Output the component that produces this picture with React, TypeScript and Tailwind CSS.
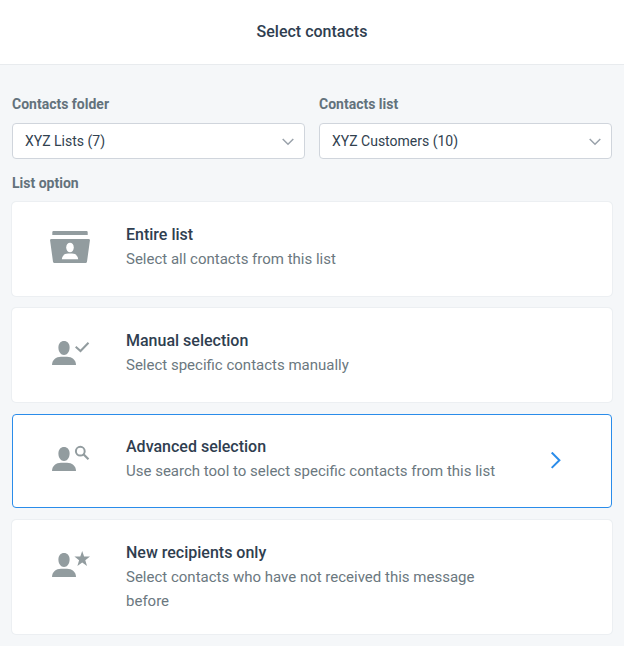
import { useState } from "react";
import type { ReactNode } from "react";

type Option = {
    id: string;
    title: string;
    description: string;
    icon: ReactNode;
};

const OptionIcon = ({ children }: { children: ReactNode }) => (
    <svg width="40" height="36" viewBox="0 0 40 36" fill="currentColor" aria-hidden="true" className="mt-[7px] shrink-0 text-[#929c9f]">
        {children}
    </svg>
);

const Person = () => (
    <>
        <path d="M14 5c3.300 0 5.600 2.500 5.600 6.500 0 4.200-2.400 7.500-5.600 7.500s-5.600-3.300-5.600-7.500C8.400 7.500 10.700 5 14 5z" />
        <path d="M2 29c0-5 4-8.200 9-8.200h6c5 0 9 3.200 9 8.200z" />
    </>
);

const options: Option[] = [
    {
        id: "entire",
        title: "Entire list",
        description: "Select all contacts from this list",
        icon: (
            <OptionIcon>
                <path d="M3.500 1h33a1.200 1.200 0 0 1 1.200 1.200V5H2.300V2.200A1.200 1.200 0 0 1 3.500 1z" />
                <path d="M1.400 9h37.200a1.300 1.300 0 0 1 1.300 1.500l-2.900 21.200a1.600 1.600 0 0 1-1.600 1.300H4.600A1.600 1.600 0 0 1 3 31.700L.100 10.500A1.300 1.300 0 0 1 1.400 9z" />
                <ellipse cx="20" cy="17.500" rx="3.800" ry="4.800" fill="white" />
                <path d="M11.800 29.300c.3-3.600 2.800-5.700 6.200-5.700h4c3.400 0 5.900 2.100 6.200 5.700z" fill="white" />
            </OptionIcon>
        ),
    },
    {
        id: "manual",
        title: "Manual selection",
        description: "Select specific contacts manually",
        icon: (
            <OptionIcon>
                <Person />
                <path d="M25.700 10.700l4.800 4.300 8-8.300" fill="none" stroke="currentColor" strokeWidth="2" />
            </OptionIcon>
        ),
    },
    {
        id: "advanced",
        title: "Advanced selection",
        description: "Use search tool to select specific contacts from this list",
        icon: (
            <OptionIcon>
                <Person />
                <circle cx="30.300" cy="9.200" r="4.400" fill="none" stroke="currentColor" strokeWidth="2" />
                <path d="M33.500 12.300l5 5" fill="none" stroke="currentColor" strokeWidth="2.200" />
            </OptionIcon>
        ),
    },
    {
        id: "new",
        title: "New recipients only",
        description: "Select contacts who have not received this message before",
        icon: (
            <OptionIcon>
                <Person />
                <path d="M32.200 3l1.900 5.600h5.900l-4.700 3.600 1.700 5.800-4.800-3.500-4.800 3.500 1.700-5.800-4.700-3.600h5.900z" />
            </OptionIcon>
        ),
    },
];

const SelectField = ({ id, label, value }: { id: string; label: string; value: string }) => (
    <div className="min-w-0 flex-1">
        <label htmlFor={id} className="block text-sm leading-5 font-bold text-[#63727c]">
            {label}
        </label>
        <div className="relative mt-[9px]">
            <select
                id={id}
                className="block h-9 w-full appearance-none rounded border border-[#d0d5dc] bg-white pr-9 pl-3 text-sm text-[#31414f]"
            >
                <option>{value}</option>
            </select>
            <svg
                width="12"
                height="8"
                viewBox="0 0 12 8"
                fill="none"
                stroke="#9aa2ab"
                strokeWidth="1.500"
                aria-hidden="true"
                className="pointer-events-none absolute top-[15px] right-[11px]"
            >
                <path d="M.700 1L6 6.300 11.300 1" />
            </svg>
        </div>
    </div>
);

export default function App() {
    const [selected, setSelected] = useState("advanced");

    return (
        <div className="min-h-screen bg-[#f5f7f9] font-['Roboto',sans-serif]">
            <header className="border-b border-[#e8ebee] bg-white px-3 py-5">
                <h1 className="text-center text-base leading-6 font-medium text-[#2f3e50]">Select contacts</h1>
            </header>

            <main className="px-3 pt-[29px] pb-3">
                <div className="flex gap-[14px]">
                    <SelectField id="folder" label="Contacts folder" value="XYZ Lists (7)" />
                    <SelectField id="list" label="Contacts list" value="XYZ Customers (10)" />
                </div>

                <h2 id="list-option" className="mt-[14px] text-sm leading-5 font-bold text-[#63727c]">
                    List option
                </h2>
                <div role="group" aria-labelledby="list-option" className="mt-[9px] flex flex-col gap-3">
                    {options.map((option) => {
                        const active = option.id === selected;
                        return (
                            <button
                                key={option.id}
                                type="button"
                                aria-pressed={active}
                                onClick={() => setSelected(option.id)}
                                className={`flex min-h-[94px] w-full items-start rounded border bg-white py-5 pr-[49px] pl-[37px] text-left ${active ? "border-[#2a8cea]" : "border-white shadow-[0_0_0_1px_#eceff2]"}`}
                            >
                                {option.icon}
                                <span className="ml-9 max-w-96 flex-1">
                                    <span className="block text-base leading-6 font-medium text-[#2f3e50]">{option.title}</span>
                                    <span className="block text-[15px] leading-6 text-[#6b7880]">{option.description}</span>
                                </span>
                                {active && (
                                    <svg
                                        width="12"
                                        height="18"
                                        viewBox="0 0 12 18"
                                        fill="none"
                                        stroke="#2a8cea"
                                        strokeWidth="2"
                                        aria-hidden="true"
                                        className="ml-auto shrink-0 self-center"
                                    >
                                        <path d="M1.700.500l7.700 7.700-7.700 7.700" />
                                    </svg>
                                )}
                            </button>
                        );
                    })}
                </div>
            </main>
        </div>
    );
}
